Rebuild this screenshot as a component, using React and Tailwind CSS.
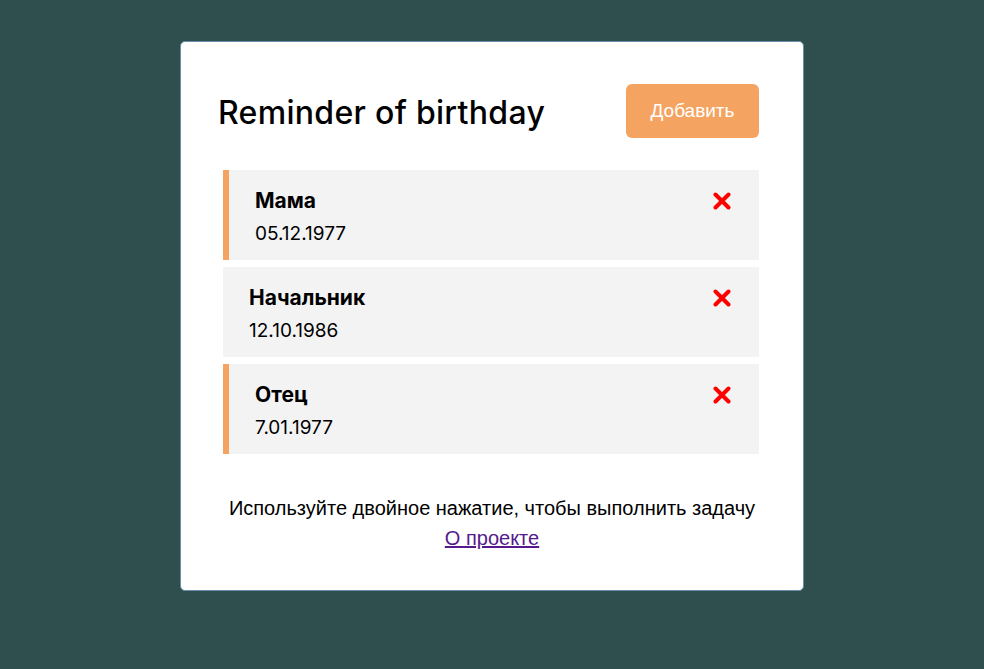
import { useState } from 'react'

const people = [
  { id: 1, name: 'Мама', date: '05.12.1977', done: true },
  { id: 2, name: 'Начальник', date: '12.10.1986', done: false },
  { id: 3, name: 'Отец', date: '7.01.1977', done: true },
]

function Cross() {
  return (
    <svg width="18" height="18" viewBox="0 0 18 18" className="shrink-0">
      <path d="M2.5 2.5 L15.5 15.5 M15.5 2.5 L2.5 15.5" stroke="#ff0000" strokeWidth="4" strokeLinecap="round" />
    </svg>
  )
}

export default function App() {
  const [items] = useState(people)

  return (
    <div className="min-h-[669px] bg-[#2f4f4f] pt-[41px] font-['Liberation_Sans',Arial,sans-serif]">
      <div className="mx-auto w-[624px] rounded-[5px] border border-[#6b8fa8] bg-white pt-[42px] pb-[37px]">
        <header className="flex items-center justify-between pl-[37px] pr-[44px]">
          <h1 className="pt-[4px] font-['Inter',sans-serif] text-[32px] font-medium tracking-[0.3px] text-black">Reminder of birthday</h1>
          <button className="h-[54px] w-[133px] rounded-[6px] bg-[#f4a460] text-[19px] text-white">Добавить</button>
        </header>

        <ul className="ml-[42px] mr-[44px] mt-[32px] flex flex-col gap-[7px]">
          {items.map((p) => (
            <li
              key={p.id}
              className={`flex h-[90px] items-start justify-between bg-[#f3f3f3] pt-[16px] pr-[28px] ${
                p.done ? 'border-l-[6px] border-[#f4a460] pl-[26px]' : 'pl-[26px]'
              }`}
            >
              <div className="font-['Inter',sans-serif] text-black">
                <p className="text-[21px] font-bold leading-[30px]">{p.name}</p>
                <p className="mt-[4px] text-[19px] leading-[28px]">{p.date}</p>
              </div>
              <div className="pt-[6px]">
                <Cross />
              </div>
            </li>
          ))}
        </ul>

        <footer className="mt-[39px] text-center text-[20px] leading-[30px] text-black">
          <p>Используйте двойное нажатие, чтобы выполнить задачу</p>
          <a href="#" className="text-[#551a8b] underline">О проекте</a>
        </footer>
      </div>
    </div>
  )
}
